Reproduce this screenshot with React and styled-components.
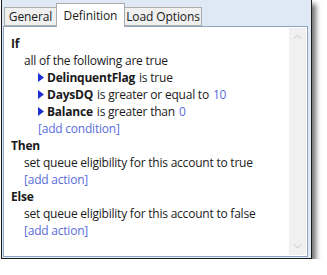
import React from "react";
import styled, { createGlobalStyle } from "styled-components";

const Global = createGlobalStyle`
  html, body { margin: 0; padding: 0; background: #ffffff; }
  body { font-family: "Open Sans", "Noto Sans", sans-serif; }
`;

const Frame = styled.div`
  margin-left: 1px;
  background: #dfe8f5;
  border: 1px solid #1b1b1b;
  border-top: none;
  box-shadow: 4px 4px 5px rgba(0, 0, 0, 0.55);
  display: flex;
  flex-direction: column;
  padding: 0 3px 1px 1px;
  box-sizing: border-box;
  width: 311px;
  height: 259px;
`;

const TabRow = styled.div`
  display: flex;
  align-items: flex-end;
  height: 26px;
  padding-left: 1px;
  position: relative;
  z-index: 1;
`;

const Tab = styled.div`
  box-sizing: border-box;
  width: ${(p) => p.$w}px;
  height: ${(p) => (p.$active ? 24 : 19)}px;
  margin-bottom: ${(p) => (p.$active ? -1 : 0)}px;
  background: ${(p) => (p.$active ? "#ffffff" : "#f0f0f0")};
  border: 1px solid #acacac;
  border-bottom: ${(p) => (p.$active ? "none" : "1px solid #acacac")};
  margin-left: ${(p) => (p.$first ? 0 : -1)}px;
  font-size: 12px;
  letter-spacing: -0.1px;
  color: #1a1a1a;
  display: flex;
  justify-content: center;
  padding-top: ${(p) => (p.$active ? 3 : 0)}px;
  line-height: 17px;
`;

const Panel = styled.div`
  flex: 1;
  background: #ffffff;
  border: 1px solid #8fa6c2;
  display: flex;
  min-height: 0;
`;

const Content = styled.div`
  flex: 1;
  padding: 8px 0 0 7px;
  font-size: 12px;
  letter-spacing: -0.22px;
  line-height: 17px;
  color: #1a1a1a;
`;

const Line = styled.div`
  padding-left: ${(p) => p.$indent || 0}px;
  display: flex;
  align-items: center;
  white-space: nowrap;
`;

const Head = styled.span`
  font-weight: 700;
`;

const Field = styled.span`
  font-weight: 700;
  margin-right: 4px;
`;

const Link = styled.span`
  color: #5a6ddc;
`;

const Value = styled.span`
  color: #5a6ddc;
  margin-left: 4px;
`;

const Arrow = styled.svg`
  width: 6px;
  height: 9px;
  margin-right: 3px;
`;

const Scrollbar = styled.div`
  width: 17px;
  margin: 1px 1px 1px 0;
  background: #f0f0f0;
  display: flex;
  flex-direction: column;
  justify-content: space-between;
  align-items: center;
  padding: 6px 0 6px;
`;

const Chevron = styled.svg`
  width: 9px;
  height: 6px;
`;

const Tri = () => (
  <Arrow viewBox="0 0 6 9">
    <path d="M0 0 L6 4.5 L0 9 Z" fill="#1e2fd4" />
  </Arrow>
);

export default function App() {
  return (
    <>
      <Global />
      <Frame>
        <TabRow>
          <Tab $w={53} $first>General</Tab>
          <Tab $w={69} $active>Definition</Tab>
          <Tab $w={78}>Load Options</Tab>
        </TabRow>
        <Panel>
          <Content>
            <Line><Head>If</Head></Line>
            <Line $indent={13}>all of the following are true</Line>
            <Line $indent={27}><Tri /><Field>DelinquentFlag</Field>is true</Line>
            <Line $indent={27}><Tri /><Field>DaysDQ</Field>is greater or equal to<Value>10</Value></Line>
            <Line $indent={27}><Tri /><Field>Balance</Field>is greater than<Value>0</Value></Line>
            <Line $indent={27}><Link>[add condition]</Link></Line>
            <Line><Head>Then</Head></Line>
            <Line $indent={13}>set queue eligibility for this account to true</Line>
            <Line $indent={13}><Link>[add action]</Link></Line>
            <Line><Head>Else</Head></Line>
            <Line $indent={13}>set queue eligibility for this account to false</Line>
            <Line $indent={13}><Link>[add action]</Link></Line>
          </Content>
          <Scrollbar>
            <Chevron viewBox="0 0 9 6">
              <path d="M0.5 5 L4.5 1 L8.5 5" fill="none" stroke="#c8c8c8" strokeWidth="1" />
            </Chevron>
            <Chevron viewBox="0 0 9 6">
              <path d="M0.5 1 L4.5 5 L8.5 1" fill="none" stroke="#c8c8c8" strokeWidth="1" />
            </Chevron>
          </Scrollbar>
        </Panel>
      </Frame>
    </>
  );
}
